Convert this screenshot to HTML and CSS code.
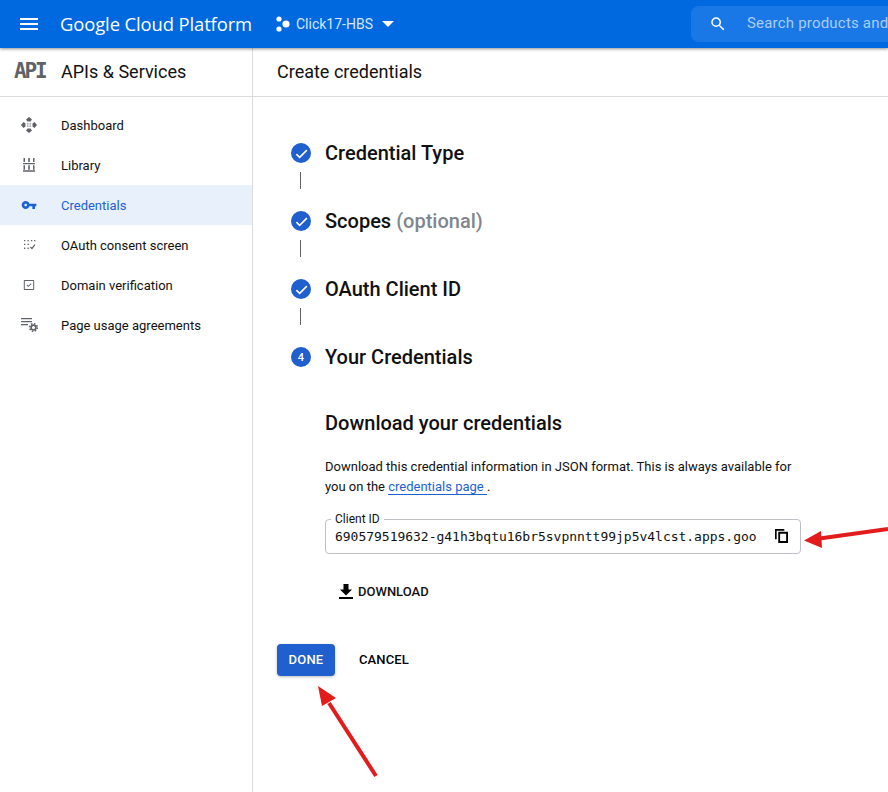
FILE: index.html
```html
<!DOCTYPE html>
<html lang="en">
<head>
<meta charset="utf-8">
<title>Create credentials</title>
<link rel="stylesheet" href="styles.css">
</head>
<body>
<div class="app">
  <header class="topbar">
    <svg class="menu-icon" viewBox="0 0 18 12"><path d="M0 0h18v2H0zM0 5h18v2H0zM0 10h18v2H0z"/></svg>
    <span class="brand">Google Cloud Platform</span>
    <svg class="project-icon" viewBox="0 0 14 16"><circle cx="3" cy="3" r="2.6"/><circle cx="3" cy="13" r="2.6"/><circle cx="10" cy="8" r="3.6"/></svg>
    <span class="project-name">Click17-HBS</span>
    <svg class="caret" viewBox="0 0 12 6"><path d="M0 0h12L6 6z"/></svg>
    <div class="search">
      <svg class="search-icon" viewBox="0 0 24 24"><path d="M15.5 14h-.79l-.28-.27A6.47 6.47 0 0 0 16 9.5 6.5 6.5 0 1 0 9.5 16c1.61 0 3.09-.59 4.23-1.57l.27.28v.79l5 4.99L20.49 19l-4.99-5zm-6 0C7.01 14 5 11.99 5 9.5S7.01 5 9.5 5 14 7.01 14 9.5 11.99 14 9.5 14z"/></svg>
      <span class="search-text">Search products and resources</span>
    </div>
  </header>
  <div class="body">
    <aside class="sidebar">
      <div class="side-head">
        <span class="api-logo">API</span>
        <span class="side-title">APIs &amp; Services</span>
      </div>
      <nav class="nav">
        <a class="nav-item">
          <svg class="nav-icon" viewBox="0 0 16 16"><path d="M8 0l3 2.500-1.500 2h-3L5 2.500zM8 16l-3-2.500 1.500-2h3l1.500 2zM0 8l2.500-3 2 1.500v3l-2 1.500zM16 8l-2.500 3-2-1.500v-3l2-1.500z"/><path d="M6.300 6.300h1.100v1.100H6.300zM8.600 6.300h1.100v1.100H8.600zM6.300 8.600h1.100v1.100H6.300zM8.600 8.600h1.100v1.100H8.600z"/></svg>
          <span>Dashboard</span>
        </a>
        <a class="nav-item">
          <svg class="nav-icon" viewBox="0 0 16 16"><path d="M2.500 1h1.500v4H2.500zM7.200 1h1.600v4H7.200zM12 1h1.500v4H12zM2 6h12v1.300H2zM2.500 8.300h1.500v4.400H2.500zM7.200 8.300h1.600v4.400H7.200zM12 8.300h1.500v4.400H12zM2 13.200h12v1.500H2z"/></svg>
          <span>Library</span>
        </a>
        <a class="nav-item active">
          <svg class="nav-icon" viewBox="0 0 24 24"><path d="M12.65 10C11.83 7.67 9.61 6 7 6c-3.31 0-6 2.69-6 6s2.69 6 6 6c2.61 0 4.83-1.67 5.65-4H17v4h4v-4h2v-4H12.65zM7 14c-1.1 0-2-.9-2-2s.9-2 2-2 2 .9 2 2-.9 2-2 2z"/></svg>
          <span>Credentials</span>
        </a>
        <a class="nav-item">
          <svg class="nav-icon" viewBox="0 0 16 16"><path d="M3 3h1.300v1.300H3zM6.500 3h1.300v1.300H6.500zM10 3h1.300v1.300H10zM13 3h1.300v1.300H13zM3 6.800h1.300v1.300H3zM6.500 6.800h1.300v1.300H6.500zM3 10.600h1.300v1.300H3zM6.500 10.600h1.300v1.300H6.500z"/><path d="M9 10.500l.9-.9 1 1 2.600-3.400.9.700-3.400 4.500z"/></svg>
          <span>OAuth consent screen</span>
        </a>
        <a class="nav-item">
          <svg class="nav-icon" viewBox="0 0 16 16"><path d="M3.500 3h9a.7.7 0 0 1 .7.7v8.600a.7.7 0 0 1-.7.7h-9a.7.7 0 0 1-.7-.7V3.700a.7.7 0 0 1 .7-.7zm.3 1v8h8.400V4z"/><path d="M5.500 8.200l.7-.7 1.200 1.200 2.400-2.400.7.7-3.100 3.100z"/></svg>
          <span>Domain verification</span>
        </a>
        <a class="nav-item">
          <svg class="nav-icon wide" viewBox="0 0 17 14"><path d="M0 0h11v1.300H0zM0 3h11v1.300H0zM0 6h7v1.300H0z"/><circle class="gear-ring" cx="12.500" cy="9.500" r="2.400"/><circle class="gear-teeth" cx="12.500" cy="9.500" r="3.900"/></svg>
          <span>Page usage agreements</span>
        </a>
      </nav>
    </aside>
    <main class="main">
      <div class="main-head">Create credentials</div>
      <div class="content">
        <ol class="stepper">
          <li class="step">
            <span class="badge"><svg class="check" viewBox="0 0 24 24"><path d="M9 16.2 4.8 12l-1.9 1.9L9 20 21.5 7.5 19.6 5.6z"/></svg></span>
            <span class="step-label">Credential Type</span>
          </li>
          <li class="connector"></li>
          <li class="step">
            <span class="badge"><svg class="check" viewBox="0 0 24 24"><path d="M9 16.2 4.8 12l-1.9 1.9L9 20 21.5 7.5 19.6 5.6z"/></svg></span>
            <span class="step-label">Scopes <span class="optional">(optional)</span></span>
          </li>
          <li class="connector"></li>
          <li class="step">
            <span class="badge"><svg class="check" viewBox="0 0 24 24"><path d="M9 16.2 4.8 12l-1.9 1.9L9 20 21.5 7.5 19.6 5.6z"/></svg></span>
            <span class="step-label">OAuth Client ID</span>
          </li>
          <li class="connector"></li>
          <li class="step">
            <span class="badge">4</span>
            <span class="step-label">Your Credentials</span>
          </li>
        </ol>
        <section class="details">
          <h2 class="details-title">Download your credentials</h2>
          <p class="details-text">Download this credential information in JSON format. This is always available for you on the <a class="link">credentials page </a>.</p>
          <div class="field">
            <span class="field-label">Client ID</span>
            <span class="field-value">690579519632-g41h3bqtu16br5svpnntt99jp5v4lcst.apps.goo</span>
            <svg class="copy-icon" viewBox="0 0 14 15"><path d="M0 0h10v1.800H1.800V11H0z"/><path fill-rule="evenodd" d="M3.500 3H14v12H3.500zM5.500 5v8H12V5z"/></svg>
          </div>
          <button class="download">
            <svg class="download-icon" viewBox="0 0 14 15"><path d="M4.5 0h5v5.5H13L7 11.5 1 5.5h3.500zM0 13h14v2H0z"/></svg>
            DOWNLOAD
          </button>
        </section>
        <div class="actions">
          <button class="done">DONE</button>
          <button class="cancel">CANCEL</button>
        </div>
      </div>
    </main>
  </div>
  <svg class="arrows" viewBox="0 0 888 792">
    <path class="arrow-line" d="M888 529 816 539"/>
    <path class="arrow-head" d="M804 540.500 821 531 822 548z"/>
    <path class="arrow-line" d="M376 776 329 703"/>
    <path class="arrow-head" d="M318 686 322 706 336 698z"/>
  </svg>
</div>
</body>
</html>
```

FILE: styles.css
```css
* { box-sizing: border-box; }
html, body { margin: 0; padding: 0; }
body { font-family: Roboto, "Liberation Sans", sans-serif; color: #111; background: #fff; }
.app { position: relative; width: 888px; height: 792px; overflow: hidden; display: flex; flex-direction: column; }

.topbar { position: relative; z-index: 2; flex: none; height: 48px; background: #0069e0; color: #fff; display: flex; align-items: center; padding-left: 20px; box-shadow: 0 1px 3px rgba(0,0,0,.45); fill: #fff; }
.menu-icon { width: 18px; height: 12px; flex: none; }
.brand { margin-left: 22px; margin-bottom: 2px; font-family: "Open Sans", Roboto, sans-serif; font-size: 18.4px; letter-spacing: -.1px; white-space: nowrap; width: 216px; flex: none; }
.project-icon { width: 14px; height: 16px; flex: none; }
.project-name { margin-left: 6px; font-size: 14px; color: #d5e5fa; width: 86px; flex: none; white-space: nowrap; }
.caret { width: 12px; height: 6px; flex: none; }
.search { margin-left: 297px; flex: none; width: 197px; height: 36px; background: #1a78e6; border-radius: 8px 0 0 8px; display: flex; align-items: center; padding-left: 18px; overflow: hidden; }
.search-icon { width: 18px; height: 18px; flex: none; }
.search-text { margin-left: 20px; margin-bottom: 2px; font-size: 15px; letter-spacing: .2px; color: #a9ccf6; white-space: nowrap; }

.body { flex: 1; display: flex; min-height: 0; }
.sidebar { flex: none; width: 253px; border-right: 1px solid #dadce0; }
.side-head { height: 49px; border-bottom: 1px solid #dadce0; display: flex; align-items: center; padding: 0 0 2px 14px; }
.api-logo { width: 47px; font-family: "DejaVu Sans Mono", monospace; font-weight: 700; font-size: 21px; letter-spacing: -2.2px; color: #5f6368; flex: none; }
.side-title { font-size: 18px; color: #111; white-space: nowrap; }
.nav { padding-top: 8px; }
.nav-item { height: 40px; display: flex; align-items: center; font-size: 13px; color: #111; fill: #5f6368; padding-left: 21px; }
.nav-item span { margin-left: 24px; white-space: nowrap; }
.nav-icon { width: 16px; height: 16px; flex: none; }
.nav-icon.wide { width: 17px; height: 14px; margin-right: -1px; }
.gear-ring { fill: none; stroke: #5f6368; stroke-width: 1.7; }
.gear-teeth { fill: none; stroke: #5f6368; stroke-width: 1.5; stroke-dasharray: 1.5 1.56; }
.nav-item.active { background: #e8f0fb; color: #1c62d4; fill: #1c62d4; }

.main { flex: 1; min-width: 0; }
.main-head { height: 49px; border-bottom: 1px solid #dadce0; padding: 0 0 2px 24px; display: flex; align-items: center; font-size: 18px; color: #111; }
.content { padding: 44px 0 0 24px; }
.stepper { list-style: none; margin: 0; padding: 0 0 0 14px; }
.step { height: 24px; display: flex; align-items: center; }
.badge { width: 20px; height: 20px; flex: none; border-radius: 50%; background: #1f5fce; color: #fff; display: flex; align-items: center; justify-content: center; font-size: 11px; font-weight: 500; fill: #fff; }
.check { width: 15px; height: 15px; }
.step-label { margin-left: 14px; font-size: 20px; font-weight: 500; color: #111; white-space: nowrap; }
.optional { color: #80868b; }
.connector { height: 44px; padding-top: 7px; padding-left: 9px; }
.connector::before { content: ""; display: block; width: 1px; height: 17px; background: #5f6368; }

.details { margin-left: 48px; }
.details-title { margin: 42px 0 0; font-size: 20px; line-height: 24px; font-weight: 500; color: #111; }
.details-text { margin: 22px 0 0; width: 476px; font-size: 13px; line-height: 20px; color: #111; }
.link { color: #1c62d4; border-bottom: 1px solid #1c62d4; }
.field { position: relative; margin-top: 22px; width: 476px; height: 35px; border: 1px solid #bdc1c6; border-radius: 4px; display: flex; align-items: center; padding-left: 9px; }
.field-label { position: absolute; left: 5px; top: -7px; padding: 0 4px; background: #fff; font-size: 12px; line-height: 13px; color: #111; }
.field-value { font-family: "DejaVu Sans Mono", "Liberation Mono", monospace; font-size: 13px; letter-spacing: -.02px; color: #111; white-space: nowrap; }
.copy-icon { position: absolute; right: 12px; top: 9px; width: 13px; height: 14px; fill: #000; }
button { font-family: inherit; border: 0; background: none; padding: 0; }
.download { margin: 19px 0 0 14px; height: 36px; display: flex; align-items: center; font-size: 13px; font-weight: 500; color: #111; }
.download-icon { width: 14px; height: 15px; margin-right: 5px; fill: #000; }
.actions { margin-top: 35px; display: flex; align-items: flex-start; }
.done { width: 58px; height: 32px; padding-bottom: 1px; border-radius: 4px; background: #1f5fce; color: #fff; font-size: 13px; font-weight: 500; letter-spacing: .2px; box-shadow: 0 1px 3px rgba(60,64,67,.35); }
.cancel { margin-left: 24px; height: 31px; font-size: 13px; font-weight: 500; letter-spacing: .1px; color: #000; }

.arrows { position: absolute; inset: 0; width: 888px; height: 792px; z-index: 3; pointer-events: none; }
.arrow-line { fill: none; stroke: #e21c1c; stroke-width: 4; }
.arrow-head { fill: #e21c1c; }
```
